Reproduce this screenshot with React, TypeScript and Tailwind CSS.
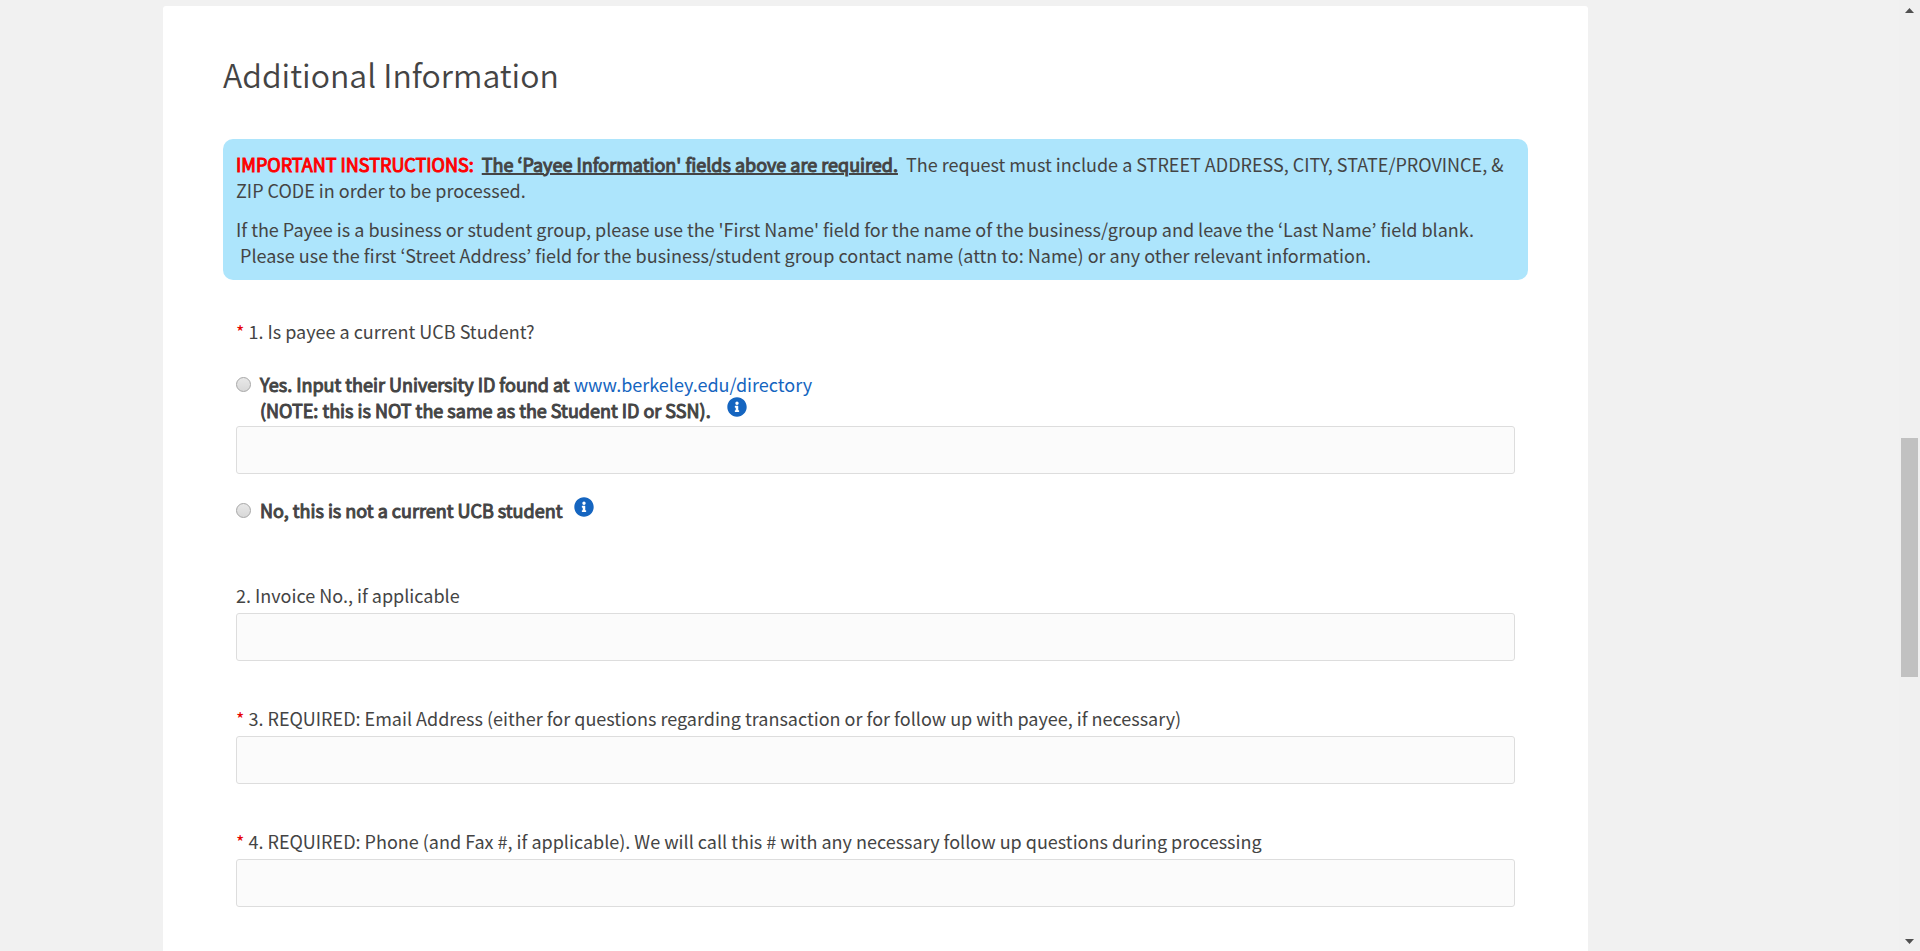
import { useState } from 'react';
import type { InputHTMLAttributes } from 'react';
import { FaInfoCircle } from 'react-icons/fa';

const questions = [
  { id: 'invoice', required: false, label: '2. Invoice No., if applicable' },
  {
    id: 'email',
    required: true,
    label:
      '3. REQUIRED: Email Address (either for questions regarding transaction or for follow up with payee, if necessary)',
  },
  {
    id: 'phone',
    required: true,
    label:
      '4. REQUIRED: Phone (and Fax #, if applicable). We will call this # with any necessary follow up questions during processing',
  },
];

const strong = 'font-normal [-webkit-text-stroke:1px_currentColor]';

function TextInput(props: InputHTMLAttributes<HTMLInputElement>) {
  return (
    <input
      type="text"
      className="block h-12 w-full rounded-[3px] border border-[#dddddd] bg-[#fbfbfb] px-3 outline-none focus:border-[#1565c0]"
      {...props}
    />
  );
}

function Radio(props: InputHTMLAttributes<HTMLInputElement>) {
  return (
    <input
      type="radio"
      name="student"
      className="mt-[6px] size-[15px] shrink-0 appearance-none rounded-full border border-[#a6a6a6] bg-linear-to-b from-[#e8e8e8] to-[#d8d8d8] checked:border-4 checked:border-[#555555]"
      {...props}
    />
  );
}

function InfoButton({ label }: { label: string }) {
  return (
    <button type="button" aria-label={label} className="size-5 shrink-0 text-[#1565c0]">
      <FaInfoCircle className="size-5" />
    </button>
  );
}

function Required() {
  return <span className="text-[#e60000]">* </span>;
}

function Scrollbar() {
  return (
    <div aria-hidden="true" className="flex w-[21px] shrink-0 flex-col items-center bg-[#f0f0f0]">
      <svg className="mt-2 h-[5px] w-[9px]" viewBox="0 0 9 5" fill="#505050">
        <path d="M4.5 0L9 5H0z" />
      </svg>
      <div className="flex w-full flex-1 flex-col px-[2px]">
        <div className="grow-[425]" />
        <div className="grow-[239] bg-[#c1c1c1]" />
        <div className="grow-[262]" />
      </div>
      <svg className="mb-[7px] h-[5px] w-[9px]" viewBox="0 0 9 5" fill="#505050">
        <path d="M0 0H9L4.5 5z" />
      </svg>
    </div>
  );
}

export default function App() {
  const [student, setStudent] = useState('');

  return (
    <div className="flex min-h-screen bg-[#f1f1f1] font-['Noto_Sans_CJK_KR',sans-serif] text-[18px] leading-[26px] text-[#444444]">
      <div className="flex flex-1 pt-[6px] pr-[311px] pl-[163px]">
        <main className="flex-1 rounded-t-[3px] bg-white px-[60px] pt-11">
          <h1 className="text-[32px] leading-[48px] font-[350]">Additional Information</h1>

          <section className="mt-[41px] rounded-[10px] bg-[#ade5fc] px-[13px] py-3">
            <p>
              <strong className={`${strong} text-[#ff0000]`}>IMPORTANT INSTRUCTIONS:</strong>&nbsp;{' '}
              <strong className={`${strong} underline decoration-2`}>
                The ‘Payee Information' fields above are required.
              </strong>
              &nbsp; The request must include a STREET ADDRESS, CITY, STATE/PROVINCE, &amp; ZIP CODE
              in order to be processed.
            </p>
            <p className="mt-[13px]">
              If the Payee is a business or student group, please use the 'First Name' field for the
              name of the business/group and leave the ‘Last Name’ field blank. &nbsp;Please use the
              first ‘Street Address’ field for the business/student group contact name (attn to:
              Name) or any other relevant information.
            </p>
          </section>

          <form className="px-[13px] pt-[38px] pb-11">
            <fieldset>
              <legend>
                <Required />
                1. Is payee a current UCB Student?
              </legend>
              <div className="mt-[27px] flex gap-[9px]">
                <Radio
                  id="student-yes"
                  value="yes"
                  checked={student === 'yes'}
                  onChange={(e) => setStudent(e.target.value)}
                />
                <div>
                  <label htmlFor="student-yes" className={strong}>
                    Yes. Input their University ID found at{' '}
                  </label>
                  <a href="http://www.berkeley.edu/directory" className="text-[#1565c0]">
                    www.berkeley.edu/directory
                  </a>
                  <div className="flex gap-4">
                    <label htmlFor="student-yes" className={strong}>
                      (NOTE: this is NOT the same as the Student ID or SSN).
                    </label>
                    <InfoButton label="About the University ID" />
                  </div>
                </div>
              </div>
              <div className="mt-[3px]">
                <TextInput aria-label="University ID" />
              </div>
              <div className="mt-[23px] flex gap-[9px]">
                <Radio
                  id="student-no"
                  value="no"
                  checked={student === 'no'}
                  onChange={(e) => setStudent(e.target.value)}
                />
                <div className="flex gap-3">
                  <label htmlFor="student-no" className={strong}>
                    No, this is not a current UCB student
                  </label>
                  <InfoButton label="About payees who are not students" />
                </div>
              </div>
            </fieldset>

            <div className="mt-[59px] flex flex-col gap-11">
              {questions.map((q) => (
                <div key={q.id} className="flex flex-col gap-[5px]">
                  <label htmlFor={q.id}>
                    {q.required && <Required />}
                    {q.label}
                  </label>
                  <TextInput id={q.id} required={q.required} />
                </div>
              ))}
            </div>
          </form>
        </main>
      </div>
      <Scrollbar />
    </div>
  );
}
